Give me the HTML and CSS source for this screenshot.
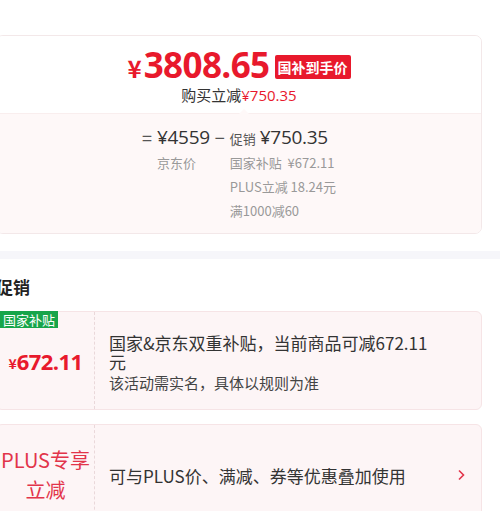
FILE: index.html
```html
<!DOCTYPE html>
<html lang="zh-CN">
<head>
  <meta charset="UTF-8">
  <title>价格明细</title>
  <link rel="stylesheet" href="styles.css">
</head>
<body>
  <div class="panel">
    <div class="price-card">
      <div class="price-top">
        <div class="final-price">
          <span class="yen">¥</span><span class="num">3808.65</span><span class="tag-red">国补到手价</span>
        </div>
        <div class="saving">购买立减<span class="red">¥750.35</span></div>
        <span class="notch"></span>
      </div>
      <div class="price-bottom">
        <div class="formula">
          <div class="op">=</div>
          <div class="big">¥4559</div>
          <div class="op">−</div>
          <div class="big"><small>促销</small>¥750.35</div>
          <div></div>
          <div class="sub">京东价</div>
          <div></div>
          <div class="sub">
            <div>国家补贴&nbsp;&nbsp;¥672.11</div>
            <div>PLUS立减 18.24元</div>
            <div>满1000减60</div>
          </div>
        </div>
      </div>
    </div>

    <div class="sep"></div>

    <h3 class="title">促销</h3>

    <div class="promo">
      <span class="tag-green">国家补贴</span>
      <div class="promo-left">
        <span class="p-yen">¥</span><span class="p-num">672.11</span>
      </div>
      <div class="promo-right">
        <div class="p-main">国家&amp;京东双重补贴，当前商品可减672.11元</div>
        <div class="p-sub">该活动需实名，具体以规则为准</div>
      </div>
    </div>

    <div class="promo">
      <div class="promo-left plus">PLUS专享<br>立减</div>
      <div class="promo-right row">
        <div class="p-main">可与PLUS价、满减、券等优惠叠加使用</div>
        <svg class="arrow" width="8" height="12" viewBox="0 0 8 12"><path d="M2 1.5 L6.5 6 L2 10.5" fill="none" stroke="#e2344a" stroke-width="1.6"/></svg>
      </div>
    </div>
  </div>
</body>
</html>
```

FILE: styles.css
```css
body { margin: 0; background: #fff; font-family: "Noto Sans CJK SC", "Noto Sans", sans-serif; color: #333; overflow: hidden; }
.panel { margin-left: -4px; padding: 35px 18px 0 0; }

.price-card { border: 1px solid #f3e8e9; border-radius: 7px; overflow: hidden; }
.price-top { position: relative; background: #fff; text-align: center; padding: 9px 0 8px; }
.final-price { height: 40px; display: flex; justify-content: center; align-items: center; color: #e8192c; }
.yen { font-size: 24px; line-height: 30px; font-weight: 700; margin-right: 2px; margin-top: 6px; }
.num { font-family: "Open Sans", sans-serif; font-size: 35px; line-height: 40px; font-weight: 700; letter-spacing: -0.6px; }
.tag-red { background: #e8192c; color: #fff; font-size: 14px; font-weight: 700; line-height: 24px; padding: 0 3px; border-radius: 2px; margin-left: 5px; margin-top: 3px; }
.saving { font-size: 15px; line-height: 20px; }
.red { color: #e8192c; font-family: "Open Sans", sans-serif; }
.notch { position: absolute; left: 242px; bottom: -1px; width: 0; height: 0; border: 5px solid transparent; border-bottom-color: #fef8f8; border-top: 0; }

.price-bottom { background: #fef8f8; border-top: 1px solid #f9eeee; padding: 11px 0 10px; }
.formula { display: grid; grid-template-columns: auto auto auto auto; justify-content: center; column-gap: 5px; color: #999; font-size: 13px; }
.op { font-size: 18px; line-height: 24px; color: #555; }
.big { font-size: 19px; line-height: 24px; color: #333; font-family: "Open Sans", "Noto Sans CJK SC", sans-serif; letter-spacing: -0.3px; }
.big small { font-size: 13px; color: #555; font-family: "Noto Sans CJK SC", sans-serif; margin-right: 4px; letter-spacing: 0; }
.sub { line-height: 24px; }

.sep { height: 8px; background: #f6f6fa; margin: 17px -18px 0 0; }

.title { margin: 16px 0 12px; font-size: 17px; line-height: 24px; font-weight: 700; color: #222; }

.promo { position: relative; display: flex; background: #fdf5f6; border: 1px solid #f6e4e6; border-radius: 6px; margin-bottom: 14px; }
.tag-green { position: absolute; left: 3px; top: -1px; background: #17a54a; color: #fff; font-size: 13px; line-height: 17px; padding: 0 3px; }
.promo-left { width: 97px; flex: none; display: flex; align-items: center; justify-content: center; border-right: 1px dashed #ead8da; color: #e8192c; }
.p-yen { font-size: 14px; font-weight: 700; margin-top: 5px; }
.p-num { font-family: "Open Sans", sans-serif; font-size: 22px; font-weight: 700; letter-spacing: -0.6px; }
.plus { flex-direction: column; text-align: center; font-size: 20px; line-height: 30px; color: #e2344a; padding: 20px 0; }
.promo-right { flex: 1; padding: 21px 44px 16px 14px; }
.promo-right.row { display: flex; align-items: center; justify-content: space-between; padding: 0 16px 0 14px; }
.p-main { font-size: 17px; line-height: 19px; color: #333; }
.p-sub { font-size: 15px; line-height: 20px; color: #444; margin-top: 2px; }
```
